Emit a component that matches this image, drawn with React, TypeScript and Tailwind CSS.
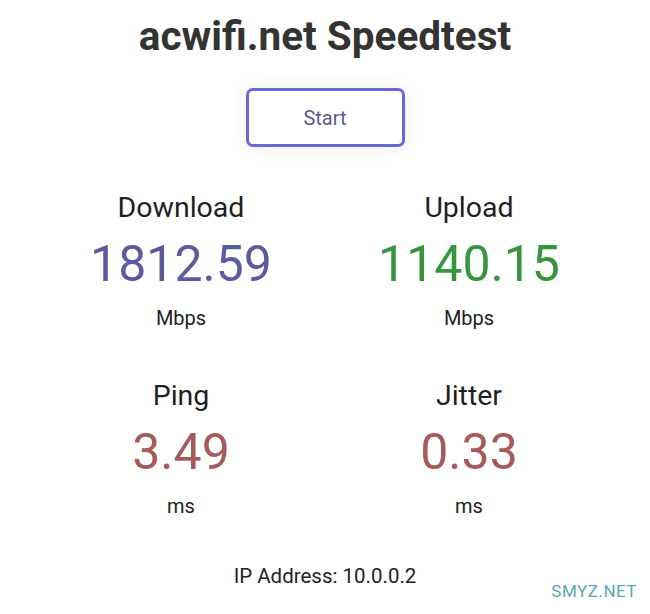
import React from 'react';

interface StatProps {
    label: string;
    value: string;
    unit: string;
    color: string;
}

const Stat = ({ label, value, unit, color }: StatProps) => {
    return (
        <div className="flex flex-col items-center">
            <div className="text-[28.5px] leading-[34px] text-[#1f1f1f]">{label}</div>
            <div className={`text-[50px] leading-[62px] mt-[8px] ${color}`}>{value}</div>
            <div className="text-[20px] leading-[24px] mt-[11px] text-[#222]">{unit}</div>
        </div>
    );
};

const App = () => {
    return (
        <div
            className="relative w-[650px] h-[614px] bg-white overflow-hidden flex flex-col items-center"
            style={{ fontFamily: 'Roboto, "Liberation Sans", sans-serif' }}
        >
            <h1 className="mt-[13px] text-[40.5px] leading-[46px] font-bold text-[#333]">acwifi.net Speedtest</h1>

            <button className="mt-[29px] w-[159px] h-[59px] rounded-[7px] border-[3px] border-[#6a68d8] bg-white text-[20px] text-[#5b5b88] shadow-[0_0_18px_rgba(0,0,0,0.08)]">
                Start
            </button>

            <div className="mt-[44px] grid grid-cols-2 w-[576px] gap-y-[49px]">
                <Stat label="Download" value="1812.59" unit="Mbps" color="text-[#5b5c9f]" />
                <Stat label="Upload" value="1140.15" unit="Mbps" color="text-[#37963d]" />
                <Stat label="Ping" value="3.49" unit="ms" color="text-[#a65b5b]" />
                <Stat label="Jitter" value="0.33" unit="ms" color="text-[#a65b5b]" />
            </div>

            <div className="mt-[43px] text-[20.5px] text-[#222]">IP Address: 10.0.0.2</div>

            <div className="absolute right-[13px] bottom-[10px] text-[17px] text-[#5aa7b2] tracking-[0.5px]">SMYZ.NET</div>
        </div>
    );
};

export default App;
